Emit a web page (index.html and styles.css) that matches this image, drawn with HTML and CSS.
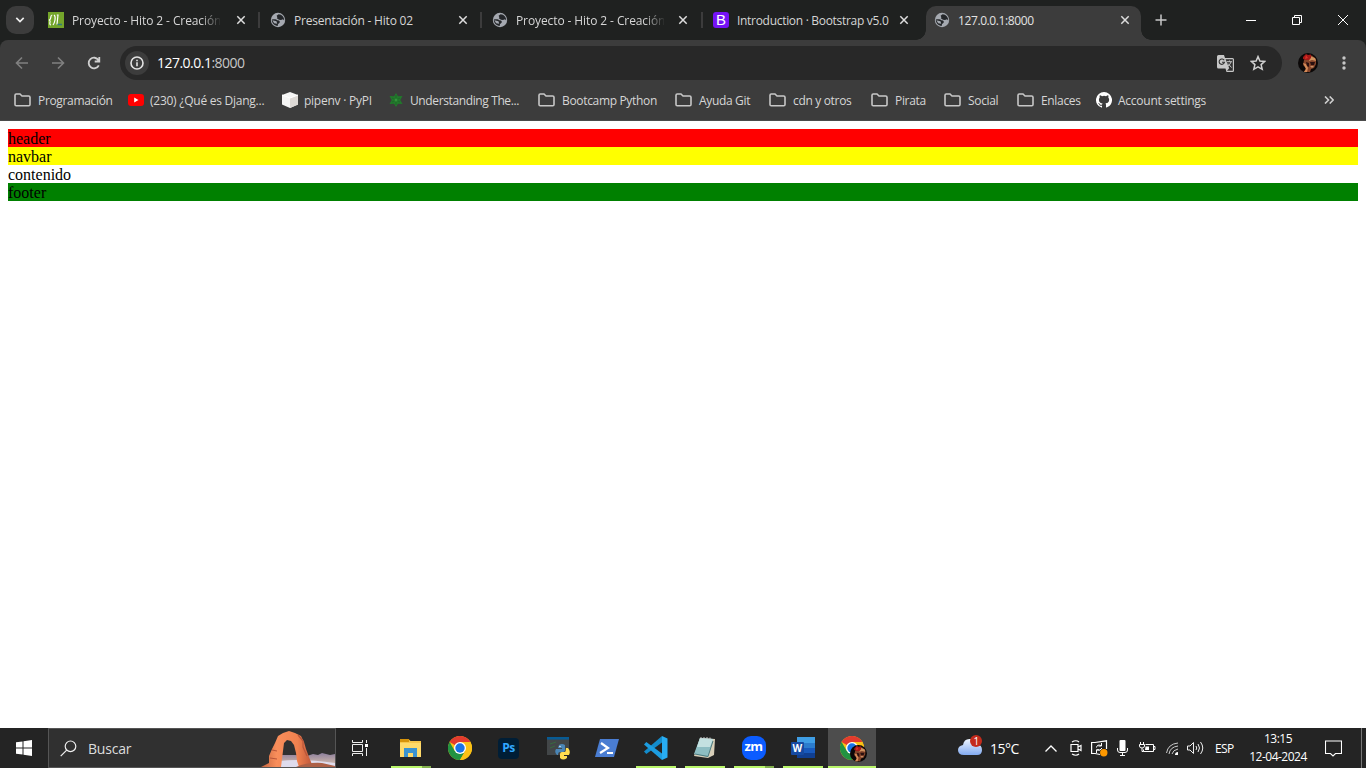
FILE: index.html
```html
<!DOCTYPE html>
<html lang="es">
<head>
<meta charset="utf-8">
<title>127.0.0.1:8000</title>
<link rel="stylesheet" href="styles.css">
</head>
<body>
<svg class="defs" width="0" height="0">
  <defs>
    <symbol id="globe" viewBox="0 0 16 16"><circle cx="8" cy="8" r="7.200" fill="#a5a9b0"/><path d="M1.800 7.600C4 7 6.400 7 7.200 8.300L9 8.600 10 10.100 8.800 11.600 8 12 7.700 13.900C4.300 13.800 1.700 11.200 1.800 7.600Z M8.600 2.200L6.600 3.800 7.400 5.200 6.800 6.200 9 7.700 11 8 13 7.200 14.200 8.600C14.400 5.200 12 2.400 8.600 2.200Z" fill="#24272a"/><path d="M2.300 8.300L6.500 9.300 7.200 11.800 4.200 11.200Z" fill="#a5a9b0"/></symbol>
    <symbol id="cross" viewBox="0 0 10 10"><path d="M1.300 1.300L8.700 8.700M8.700 1.300L1.300 8.700" stroke="#dedede" stroke-width="1.500"/></symbol>
    <symbol id="folder" viewBox="0 0 17 14"><path d="M1 2.200Q1 1 2.200 1H6L8 3H14.600Q16 3 16 4.300V11.500Q16 12.800 14.800 12.800H2.200Q1 12.800 1 11.500Z" fill="none" stroke="#c7c7c7" stroke-width="1.600"/></symbol>
    <symbol id="chrome" viewBox="0 0 24 24"><circle cx="12" cy="12" r="12" fill="#fbc116"/><path d="M12 12L1.600 6A12 12 0 0 1 22.400 6H12Z" fill="#e33b2e"/><path d="M1.600 6A12 12 0 0 0 12 24L17.200 15 12 12 6.800 15Z" fill="#229342"/><path d="M12 6H22.400A12 12 0 0 1 12 24L17.200 15Z" fill="#fbc116"/><circle cx="12" cy="12" r="6" fill="#fff"/><circle cx="12" cy="12" r="4.700" fill="#1a73e8"/></symbol>
    <symbol id="avatar" viewBox="0 0 20 20"><circle cx="10" cy="10" r="10" fill="#0b0808"/><path d="M6 7L9 3 14 2.500 18 6 18 11 16 15 13 16 12 19 6 19 8 15 5 12Z" fill="#85452b"/><path d="M12 3L17 5 18 8 14 7 11 8Z" fill="#d0935f"/><path d="M5 10L8 11 10 15 9 19H6L8 16Z" fill="#d28a58"/><path d="M5 4L8 1 10 2 13 1.500 13 5 11 7 8 7 5 6Z" fill="#a51818"/><path d="M8 2L10 5 7 6Z" fill="#d93026"/><path d="M12 9L17 9 16 12 13 12ZM8 9L11 10 11 14 9 13Z" fill="#2a1010"/><path d="M12 13L16 13 14 15Z" fill="#c89065"/></symbol>
  </defs>
</svg>

<div class="tabstrip">
  <div class="tab-search"><svg width="10" height="6" viewBox="0 0 10 6"><path d="M1.300 .9L5 4.500 8.700 .9" fill="none" stroke="#eee" stroke-width="1.700"/></svg></div>
  <div class="tab"><svg class="favicon" viewBox="0 0 16 16"><path fill="#74a52b" d="M0 0H16V16H0Z"/><path d="M4.300 3Q3 3 2.900 5L2.400 7 1.400 8 2.100 9L1.800 11.500Q1.800 13 3 13M6 3Q7.600 4 7 8 6.500 11 5 13M8.800 3H10L9 12.500" stroke="#fff" fill="none" stroke-width="1.200"/><path d="M9.500 12.500H14" stroke="#35797a" stroke-width="1.500"/></svg><span class="title fade long">Proyecto - Hito 2 - Creación</span><svg class="close"><use href="#cross"/></svg></div>
  <div class="tab"><svg class="favicon"><use href="#globe"/></svg><span class="title">Presentación - Hito 02</span><svg class="close"><use href="#cross"/></svg></div>
  <div class="tab third"><svg class="favicon"><use href="#globe"/></svg><span class="title fade long">Proyecto - Hito 2 - Creación</span><svg class="close"><use href="#cross"/></svg></div>
  <div class="tab last"><span class="favicon bootstrap">B</span><span class="title boot">Introduction · Bootstrap v5.0</span><svg class="close"><use href="#cross"/></svg></div>
  <div class="tab active"><svg class="favicon"><use href="#globe"/></svg><span class="title addr">127.0.0.1:8000</span><svg class="close"><use href="#cross"/></svg></div>
  <svg class="newtab" viewBox="0 0 12 12"><path d="M6 .5V11.500M.5 6H11.500" stroke="#c7c7c7" stroke-width="1.500"/></svg>
  <div class="winbtns">
    <svg width="10" height="10"><path d="M0 5.500H10" stroke="#fff"/></svg>
    <svg width="10" height="10"><path d="M.5 2.500H7.500V9.500H.5ZM2.500 2.500V.5H9.500V7.500H7.500" stroke="#fff" fill="none"/></svg>
    <svg width="10" height="10"><path d="M0 0L10 10M10 0L0 10" stroke="#fff"/></svg>
  </div>
</div>

<div class="chrome-bars">
  <div class="toolbar">
    <svg class="nav" viewBox="0 0 14 14"><path d="M13 7H1.800M7 1.500L1.500 7 7 12.500" stroke="#808080" fill="none" stroke-width="1.600"/></svg>
    <svg class="nav" viewBox="0 0 14 14"><path d="M1 7H12.200M7 1.500L12.500 7 7 12.500" stroke="#808080" fill="none" stroke-width="1.600"/></svg>
    <svg class="nav" viewBox="0 0 14 14"><path d="M11.800 9.300A5.300 5.300 0 1 1 11.500 4.200M12.300 .9V5.500H7.700" stroke="#d0d0d0" fill="none" stroke-width="1.800"/></svg>
    <div class="omnibox">
      <span class="info"><svg width="14" height="14"><circle cx="7" cy="7" r="6" fill="none" stroke="#e3e3e3" stroke-width="1.600"/><path d="M7 6.200V10.300M7 3.700V5.200" stroke="#e3e3e3" stroke-width="1.600"/></svg></span>
      <span class="url"><b>127.0.0.1</b>:8000</span>
      <svg class="translate" width="17" height="17"><path d="M1.500 0H7L8 3H15.500Q17 3 17 4.500V15.500Q17 17 15.500 17H9.500L8.500 13.500H1.500Q0 13.500 0 12V1.500Q0 0 1.500 0Z" fill="#c7c7c7"/><path d="M8.600 4.200H15.800V15.800H10L12.200 13.200Z" fill="#303030"/><path d="M7.200 5.300A2.700 2.700 0 1 0 7.500 7.200H5" fill="none" stroke="#303030" stroke-width="1.100"/><path d="M9.800 6.700H15M12.400 5.500V6.700M14 7Q13 10 10.500 11.500M11 8.500L14.500 12.500" stroke="#c7c7c7" fill="none"/></svg>
      <svg width="16" height="16" viewBox="0 0 16 16"><path d="M8 1.600L9.900 6 14.700 6.400 11.100 9.600 12.200 14.300 8 11.800 3.800 14.300 4.900 9.600 1.300 6.400 6.100 6Z" stroke="#d0d0d0" fill="none" stroke-width="1.500"/></svg>
    </div>
    <svg class="profile"><use href="#avatar"/></svg>
    <svg class="dots" width="4" height="14"><g fill="#c7c7c7"><circle cx="2" cy="2" r="1.700"/><circle cx="2" cy="7" r="1.700"/><circle cx="2" cy="12" r="1.700"/></g></svg>
  </div>
  <div class="bookmarks">
    <span><svg class="fold"><use href="#folder"/></svg>Programación</span>
    <span class="site"><svg width="16" height="12"><rect width="16" height="12" rx="3" fill="#f00"/><path d="M6.200 3.500V8.500L10.500 6Z" fill="#fff"/></svg>(230) ¿Qué es Djang...</span>
    <span class="site"><svg width="16" height="16"><path d="M8 0L16 3V12.500L8 16 0 12.500V3Z" fill="#f6f6f5"/><path d="M8 6L16 3V12.500L8 16Z" fill="#ddd9d5"/><path d="M0 3L8 6 16 3" stroke="#fff" fill="none"/></svg>pipenv · PyPI</span>
    <span class="green"><svg width="14" height="14" viewBox="0 0 14 14"><path d="M7 0L9 3.200 13.500 3 11.300 7 13.500 11 9 10.800 7 14 5 10.800 .5 11 2.700 7 .5 3 5 3.200Z" fill="#217a2b"/><path d="M7 2V12M3 5L11 9M11 5L3 9" stroke="#1d5c26" stroke-width=".6"/><circle cx="7" cy="7" r="1.500" fill="#33943b"/></svg>Understanding The...</span>
    <span><svg class="fold"><use href="#folder"/></svg>Bootcamp Python</span>
    <span><svg class="fold"><use href="#folder"/></svg>Ayuda Git</span>
    <span><svg class="fold"><use href="#folder"/></svg>cdn y otros</span>
    <span><svg class="fold"><use href="#folder"/></svg>Pirata</span>
    <span><svg class="fold"><use href="#folder"/></svg>Social</span>
    <span><svg class="fold"><use href="#folder"/></svg>Enlaces</span>
    <span class="site"><svg width="16" height="16" viewBox="0 0 16 16"><path d="M8 0a8 8 0 0 0-2.530 15.590c.4.070.55-.17.55-.38v-1.490c-2.230.48-2.690-.95-2.690-.95-.36-.92-.89-1.170-.89-1.170-.73-.5.06-.49.06-.49.8.060 1.230.83 1.230.83.71 1.220 1.870.87 2.330.66.070-.52.28-.87.5-1.070-1.770-.2-3.640-.89-3.640-3.950 0-.87.31-1.590.82-2.150-.080-.2-.35-1.020.080-2.120 0 0 .67-.21 2.200.82a7.600 7.600 0 0 1 4 0c1.530-1.040 2.200-.82 2.200-.82.43 1.100.16 1.920.080 2.120.51.56.82 1.270.82 2.150 0 3.070-1.870 3.750-3.650 3.950.29.25.54.73.54 1.480v2.200c0 .21.150.46.55.38A8 8 0 0 0 8 0Z" fill="#fff"/></svg>Account settings</span>
    <svg class="more" width="10" height="8"><path d="M1 .5L4.500 4 1 7.500M5.700 .5L9.200 4 5.700 7.500" fill="none" stroke="#d0d0d0" stroke-width="1.600"/></svg>
  </div>
</div>

<main class="page">
  <div class="header">header</div>
  <div class="navbar">navbar</div>
  <div>contenido</div>
  <div class="footer">footer</div>
</main>

<div class="taskbar">
  <div class="start"><svg width="16" height="16"><path d="M0 2.300L6.500 1.400V7.500H0ZM7.500 1.200L16 0V7.500H7.500ZM0 8.500H6.500V14.600L0 13.700ZM7.500 8.500H16V16L7.500 14.800Z" fill="#fff"/></svg></div>
  <div class="search">
    <svg width="17" height="17"><circle cx="10.500" cy="6.300" r="5.300" stroke="#eee" fill="none" stroke-width="1.200"/><path d="M6.700 10.200L.7 16.200" stroke="#eee" stroke-width="1.200"/></svg>
    <span>Buscar</span>
    <svg class="arch" width="75" height="38" viewBox="0 0 75 38"><defs><linearGradient id="rock"><stop stop-color="#c4643f"/><stop offset=".3" stop-color="#f98e5b"/><stop offset=".7" stop-color="#f0814f"/><stop offset="1" stop-color="#bd5538"/></linearGradient><linearGradient id="sand" x2="0" y2="1"><stop stop-color="#8d7f9d"/><stop offset="1" stop-color="#e2c8ae"/></linearGradient></defs><path d="M20 26L35 26 47 27 53 25 58 26 62 24 70 26 75 25V38H12Z" fill="url(#sand)"/><path d="M19 32Q42 29 75 34V38H12Z" fill="#dfdced"/><path d="M1 38L9 34 9 27 12 20 15 14 18 7 23 4 29 2 35 4 41 7 44 13 46 20 49 28 53 38H39L37 32 36 24 34 16 31 12 27 11 24 14 23 22 22 30 21 38Z" fill="url(#rock)"/><path d="M38 6L43 12 43 18 47 27M12 21L17 22M10 29L17 30" fill="none" stroke="#b9563a" stroke-width="1.200"/><path d="M36 38Q48 33 62 34L75 37V38Z" fill="#ad6046"/></svg>
  </div>
  <div class="taskview"><svg width="17" height="16"><path d="M.5 0V2.500H10.500V0M.5 4.500H10.500V11.500H.5ZM.5 16V13.500H10.500V16M14.500 0V3M14.500 8V16" stroke="#eee" fill="none"/><path d="M13 4H16V7H13Z" fill="#fff"/></svg></div>
  <div class="apps">
    <div class="app run group"><svg viewBox="0 0 24 24"><path d="M1 3.500H10L11.500 5H22V21H1Z" fill="#f8c64a"/><path d="M1 3H10V6H1Z" fill="#d7940b"/><path d="M1 7H22V21H1Z" fill="#ffda6a"/><path d="M5 21V12H18V21H14V17H9V21Z" fill="#3b93d0"/></svg></div>
    <div class="app"><svg><use href="#chrome"/></svg></div>
    <div class="app"><span class="photoshop">Ps</span></div>
    <div class="app"><svg viewBox="0 0 24 24"><path d="M1 1H23V19H1Z" fill="#424648"/><path d="M1 1H23V3.500H1Z" fill="#075b94"/><path d="M4 8L10 6M4 12L9 10" stroke="#386940"/><path d="M13 9Q16 7 19 9V14Q19 16 17 16H14Q12 16 12 19H11Q8 16 10 13H16V12H12Z" fill="#4a86b7"/><path d="M20 12H22Q25 15 23 19H18V20H21V22Q17 25 14 22V18Q14 16 16 16H19Q20 15 20 12Z" fill="#ffdc4f"/><circle cx="14" cy="10.500" r=".7" fill="#fff"/></svg></div>
    <div class="app"><svg viewBox="0 0 24 24"><path d="M5 3H24L19 21H0Z" fill="#4a7dd2"/><path d="M6 7L13 12 5 17M12 17H18" stroke="#fff" fill="none" stroke-width="2.200"/></svg></div>
    <div class="app run"><svg viewBox="0 0 24 24"><path d="M18 0L23.500 2.500V21.500L18 24Z" fill="#28adf3"/><path d="M18 0L0 15.500 2.300 18 18 6.500Z" fill="#138ccc"/><path d="M18 24L0 8.500 2.300 6 18 17.500Z" fill="#1d9de0"/></svg></div>
    <div class="app run"><svg viewBox="0 0 24 24"><path d="M7 2L22 3 21 19 15 22 1 20Z" fill="#d8cfb9"/><path d="M7 2L20 3 15 21 1 18Z" fill="#8dbec3"/><path d="M7 2L20 3 17 11 4 11Z" fill="#c3e1e1"/><path d="M2 18L15 20.500 20 5" fill="none" stroke="#4d7b80"/><path d="M8 1V3M11 1V3M14 1V3M17 1.500V3.500" stroke="#ccc"/></svg></div>
    <div class="app run group"><span class="zoom">zm</span></div>
    <div class="app run"><svg viewBox="0 0 24 24"><path d="M6 1H24V22H6Z" fill="#103f91"/><path d="M6 1H24V7H6Z" fill="#3f9ee5"/><path d="M6 7H24V12H6Z" fill="#2b7ccd"/><path d="M6 12H24V17H6Z" fill="#185abd"/><rect y="6" width="13" height="13" rx="1" fill="#164aa1"/><text x="1.500" y="16" class="word-letter">W</text></svg></div>
    <div class="app run current"><svg><use href="#chrome"/></svg><svg class="badge"><use href="#avatar"/></svg></div>
  </div>
  <div class="tray">
    <div class="weather"><svg width="26" height="22"><defs><linearGradient id="cloud" x2="0" y2="1"><stop stop-color="#eff6ff"/><stop offset="1" stop-color="#82aaf0"/></linearGradient></defs><path d="M6 20Q0 20 0 15Q0 11 5 10Q6 3 13 4Q18 4 19 9Q24 10 24 15Q24 20 19 20Z" fill="url(#cloud)"/><circle cx="18" cy="6" r="6" fill="#c42b1c"/><text x="15.500" y="9.500" class="count">1</text></svg><span>15°C</span></div>
    <svg class="chev" width="12" height="7"><path d="M.5 6.500L6 1 11.500 6.500" fill="none" stroke="#fff" stroke-width="1.300"/></svg>
    <svg class="meet" width="12" height="16"><path d="M1 4.500H8V11.500H1ZM8 7L11 5.500V10.500L8 9M2 2Q6-.5 9 2M2 14Q6 16.500 9 14" fill="none" stroke="#fff" stroke-width="1.200"/></svg>
    <svg class="sync" width="17" height="17"><path d="M15.500 9V.8L4 2.500H.6V13.500H4L9 14.500M.6 2.500" fill="none" stroke="#fff" stroke-width="1.200"/><path d="M5.500 7.500Q6 4 10 5.500M10.500 3V6H7.500M11 8Q9 11.500 6 10M5.500 13V9.700H8.500" fill="none" stroke="#fff"/><circle cx="12.800" cy="12.800" r="3.700" fill="#ff9900"/></svg>
    <svg class="mic" width="11" height="16"><rect x="2.500" width="6" height="11" rx="1" fill="#fff"/><path d="M.5 8V10Q.5 12.500 3 12.500H8Q10.500 12.500 10.500 10V8M5.500 12V15.500M3 15.500H8" fill="none" stroke="#fff"/></svg>
    <svg class="battery" width="17" height="12"><path d="M6.500 2.500H14.500V9.500H4.500V7.500M14.500 4.500H16V7.500H14.500M.5 2.500H5.500V4Q5.500 6 3 6Q.5 6 .5 4ZM1.500 0V2M4.500 0V2M3 6V9.500H4.500" fill="none" stroke="#fff"/><path d="M6.500 4.500H10V8H6Z" fill="#fff"/></svg>
    <svg class="wifi" width="13" height="13"><path d="M.5 11Q2 2 12 1M3 12Q4 5 12 4M6 12Q7 8 12 7" fill="none" stroke="#ccc"/><path d="M9 13Q9 10 12 10V13Z" fill="#fff"/></svg>
    <svg class="sound" width="17" height="14"><path d="M.5 5H3L6.500 1.500V12.500L3 9H.5ZM9 5Q10.500 7 9 9M11 3Q14 7 11 11M13.500 1Q18 7 13.500 13" fill="none" stroke="#eee"/></svg>
    <span class="lang">ESP</span>
    <div class="clock"><span>13:15</span><span class="date">12-04-2024</span></div>
    <svg class="notice" width="17" height="17"><path d="M.5 1H16.500V13.500H10.500L8 16 5.500 13.500H.5Z" fill="none" stroke="#fff" stroke-width="1.100"/></svg>
  </div>
</div>
</body>
</html>
```

FILE: styles.css
```css
* { box-sizing: border-box; }
body { margin: 0; height: 768px; overflow: hidden; display: flex; flex-direction: column; background: #fff; font-family: "Open Sans", "Noto Sans", sans-serif; font-size: 12px; color: #d6d6d6; }
svg { flex: none; display: block; }
.defs { position: absolute; }
.tabstrip { height: 40px; flex: none; background: #1f2120; display: flex; align-items: center; }
.tab-search { width: 28px; height: 28px; margin: 0 14px 0 6px; border-radius: 10px; background: #3c3c3c; display: flex; align-items: center; justify-content: center; }
.tab { width: 222px; flex: none; height: 16px; display: flex; align-items: center; position: relative; }
.tab:not(.last):not(.active)::after { content: ""; position: absolute; right: 10px; top: 0; width: 2px; height: 16px; background: #3c3c3c; }
.third { width: 221px; }
.third .close { margin-left: 14px; }
.favicon { width: 16px; height: 16px; flex: none; margin-right: 8px; }
.title { width: 148px; white-space: nowrap; overflow: hidden; letter-spacing: -.2px; line-height: 18px; padding-top: 2px; }
.long { letter-spacing: -.1px; }
.fade { -webkit-mask-image: linear-gradient(90deg, #000 128px, transparent 150px); }
.close { width: 10px; height: 10px; margin-left: 16px; }
.boot { width: 155px; letter-spacing: -.3px; }
.boot + .close { margin-left: 7px; }
.bootstrap { background: #7512f5; border-radius: 3px; color: #fff; font: 15px/16px "Liberation Sans", sans-serif; text-align: center; }
.last { width: 213px; }
.active { width: 215px; height: 34px; align-self: flex-end; padding-left: 8px; background: #3c3c3c; border-radius: 10px 10px 0 0; padding-bottom: 6px; }
.active::before, .active::after { content: ""; position: absolute; bottom: 0; width: 10px; height: 10px; }
.active::before { left: -10px; background: radial-gradient(circle at 0 0, transparent 9.500px, #3c3c3c 10px); }
.active::after { right: -10px; background: radial-gradient(circle at 100% 0, transparent 9.500px, #3c3c3c 10px); }
.active .title { color: #e3e3e3; width: 155px; letter-spacing: -.4px; }
.active .close { margin-left: 7px; }
.newtab { width: 12px; height: 12px; margin-left: 14px; }
.winbtns { margin-left: auto; margin-right: 18px; display: flex; gap: 36px; }
.chrome-bars { height: 81px; flex: none; background: linear-gradient(#3c3c3c, #3c3c3c) 0 0 / 100% 80px no-repeat #4b4b4b; border-radius: 8px 8px 0 0; position: relative; }
.chrome-bars::before { content: ""; position: absolute; z-index: -1; inset: 0 0 60px; background: #1f2120; }
.toolbar { height: 46px; display: flex; align-items: center; padding-left: 15px; }
.nav { width: 14px; height: 14px; margin-right: 22px; }
.omnibox { width: 1162px; height: 34px; margin-left: -3px; border-radius: 17px; background: #282828; display: flex; align-items: center; padding: 0 16px 0 5px; }
.info { width: 24px; height: 24px; border-radius: 50%; background: #3c3c3c; display: flex; align-items: center; justify-content: center; margin-right: 8px; }
.url { flex: 1; font-size: 14px; line-height: 18px; padding-bottom: 1px; letter-spacing: -.52px; color: #c7c7c7; }
.url b { font-weight: 400; color: #fff; }
.translate { margin-right: 16px; }
.profile { width: 20px; height: 20px; margin-left: 16px; }
.dots { margin-left: 24px; }
.bookmarks { height: 28px; padding-left: 13.500px; display: grid; grid-template-columns: 114px 154px 107px 149px 137px 94px 102px 73px 73px 79px 228px 10px; align-items: center; letter-spacing: -.33px; }
.bookmarks span { display: flex; align-items: center; gap: 7.500px; white-space: nowrap; }
.bookmarks .site { gap: 6.500px; letter-spacing: -.25px; }
.bookmarks .green { letter-spacing: -.38px; }
.fold { width: 17px; height: 14px; }
.page { flex: 1; padding: 8px; font: 16px/17px "Liberation Serif", serif; color: #000; }
.page div { padding-top: 1px; }
.header { background: red; }
.navbar { background: yellow; }
.footer { background: green; }
.taskbar { height: 40px; flex: none; background: #242424; display: flex; color: #fff; }
.start { width: 48px; display: flex; align-items: center; justify-content: center; }
.search { width: 288px; border: 1px solid #555; background: #303030; display: flex; align-items: center; padding-left: 11px; }
.search span { flex: 1; margin-left: 11px; font-size: 14px; letter-spacing: -.2px; color: #ddd; }
.taskview { width: 50px; display: flex; align-items: center; justify-content: center; padding-right: 2px; }
.apps { display: flex; width: 490px; }
.app { width: 49px; flex: none; display: flex; align-items: center; justify-content: center; position: relative; }
.app > svg { width: 24px; height: 24px; }
.app.run::after { content: ""; position: absolute; left: 5px; bottom: 0; width: 40px; height: 2px; background: #b9f66b; }
.app.group::after { background: linear-gradient(90deg, #b9f66b 31px, #82b04e 31px); }
.app.current { width: 48px; margin-left: 1px; background: #4d4d4d; }
.app.current::after { left: 0; width: 48px; }
.app > .badge { position: absolute; left: 22px; top: 17px; width: 17px; height: 17px; }
.photoshop { width: 21px; height: 21px; border-radius: 4px; background: #001e36; color: #31a8ff; font: bold 12px/20px "Open Sans", sans-serif; text-align: center; letter-spacing: -.5px; }
.zoom { width: 24px; height: 24px; border-radius: 9px; background: #0b5cff; font: bold 13px/20px "Open Sans", sans-serif; text-align: center; letter-spacing: -.5px; }
.word-letter { font: bold 10px "Open Sans", sans-serif; fill: #fff; }
.count { font: 10px "Open Sans", sans-serif; fill: #fff; }
.tray { flex: 1; margin-left: 82px; display: flex; align-items: center; border-right: 1px solid #777; margin-right: 4px; }
.weather { width: 87px; flex: none; display: flex; align-items: center; gap: 6px; font-size: 14px; letter-spacing: -.5px; }
.weather svg { margin-top: -4px; }
.chev { margin-right: 13px; }
.meet { margin-right: 9px; }
.sync { margin-right: 9px; }
.mic { margin-right: 11px; }
.battery { margin-right: 10px; }
.wifi { margin-right: 8px; }
.sound { margin-right: 11px; }
.lang { width: 34px; font-size: 12px; letter-spacing: -.6px; }
.clock { width: 58px; text-align: center; display: flex; flex-direction: column; line-height: 18px; white-space: nowrap; letter-spacing: -.5px; }
.notice { margin-left: 17.500px; }
```
